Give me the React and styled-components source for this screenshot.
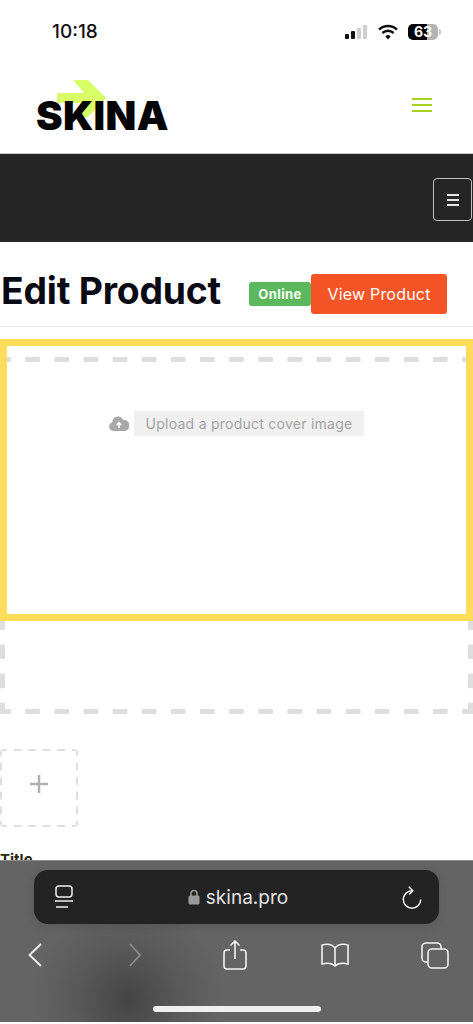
import React from 'react';
import styled, { createGlobalStyle, css } from 'styled-components';

const GlobalStyle = createGlobalStyle`
  html, body {
    margin: 0;
    padding: 0;
    background: #fff;
  }
  * {
    box-sizing: border-box;
  }
`;

// browser dashes come out too short, so the dashed outlines are gradients
const dashedEdges = (weight, dash, period, offset) => css`
  background-image:
    linear-gradient(90deg, #dedede ${dash}px, transparent ${dash}px),
    linear-gradient(90deg, #dedede ${dash}px, transparent ${dash}px),
    linear-gradient(180deg, #dedede ${dash}px, transparent ${dash}px),
    linear-gradient(180deg, #dedede ${dash}px, transparent ${dash}px);
  background-size:
    ${period}px ${weight}px,
    ${period}px ${weight}px,
    ${weight}px ${period}px,
    ${weight}px ${period}px;
  background-position:
    ${offset}px 0,
    ${offset}px 100%,
    0 ${offset}px,
    100% ${offset}px;
  background-repeat: repeat-x, repeat-x, repeat-y, repeat-y;
`;

const Page = styled.div`
  width: 473px;
  height: 1024px;
  display: flex;
  flex-direction: column;
  overflow: hidden;
  background: #fff;
  font-family: Inter, "Liberation Sans", sans-serif;
`;

const StatusBar = styled.div`
  height: 60px;
  flex: none;
  display: flex;
  justify-content: space-between;
  padding: 20px 35px 0 52px;
`;

const Clock = styled.div`
  font-size: 19px;
  font-weight: 500;
  line-height: 23px;
  color: #111;
`;

const StatusIcons = styled.div`
  display: flex;
  align-items: center;
  gap: 10px;
  height: 23px;
`;

const Battery = styled.div`
  position: relative;
  width: 30px;
  height: 16px;
  border-radius: 5px;
  background: linear-gradient(90deg, #000 0 63%, #b4b4b4 63% 100%);
  color: #fff;
  font-size: 14px;
  font-weight: 700;
  line-height: 16px;
  text-align: center;

  &::after {
    content: '';
    position: absolute;
    right: -3px;
    top: 5px;
    width: 2px;
    height: 6px;
    border-radius: 0 2px 2px 0;
    background: #c4c4c4;
  }
`;

const LogoBar = styled.header`
  height: 94px;
  flex: none;
  display: flex;
  justify-content: space-between;
  align-items: flex-start;
  padding: 20px 41px 0 37px;
  border-bottom: 1px solid #c9c9c9;
`;

const Logo = styled.div`
  position: relative;
  width: 132px;
  height: 60px;
`;

const LogoArrow = styled.svg`
  position: absolute;
  left: 20px;
  top: 0;
`;

const LogoText = styled.div`
  position: absolute;
  left: -1px;
  top: 11px;
  font-size: 40px;
  line-height: 50px;
  font-weight: 900;
  letter-spacing: 0.3px;
  color: #050505;
`;

const MenuLines = styled.div`
  width: 20px;
  margin-top: 18px;
  display: flex;
  flex-direction: column;
  gap: 4px;
`;

const MenuLine = styled.span`
  display: block;
  height: 2px;
  background: #a6d321;
`;

const DarkBar = styled.nav`
  height: 88px;
  flex: none;
  display: flex;
  justify-content: flex-end;
  align-items: flex-start;
  padding: 24px 1px 0 0;
  background: #252525;
`;

const ToggleButton = styled.button`
  width: 39px;
  height: 43px;
  padding: 0;
  display: flex;
  align-items: center;
  justify-content: center;
  background: transparent;
  border: 1.5px solid #c0c0c0;
  border-radius: 4px;
`;

const TitleRow = styled.div`
  height: 85px;
  flex: none;
  display: flex;
  align-items: center;
  padding: 20px 0 0 1px;
  border-bottom: 1px solid #e9e9e9;
`;

const Heading = styled.h1`
  margin: 0 28px 6px 0;
  font-size: 37.3px;
  line-height: 44px;
  font-weight: 700;
  letter-spacing: -0.2px;
  color: #0a0a14;
  white-space: nowrap;
`;

const OnlineBadge = styled.span`
  width: 62px;
  height: 24px;
  display: flex;
  align-items: center;
  justify-content: center;
  background: #5cb85c;
  border-radius: 3px;
  color: #fff;
  font-size: 13px;
  font-weight: 700;
  letter-spacing: 0.4px;
`;

const ViewButton = styled.button`
  width: 136px;
  height: 40px;
  padding: 0;
  background: #f45426;
  border: none;
  border-radius: 3px;
  color: #fff;
  font-family: inherit;
  font-size: 16px;
  letter-spacing: 0.2px;
`;

const Content = styled.main`
  flex: 1;
  min-height: 0;
  overflow: hidden;
  padding-top: 30px;
`;

const CoverDrop = styled.div`
  position: relative;
  height: 357px;
  display: flex;
  justify-content: center;
  padding-top: 54px;
  ${dashedEdges(5, 14.7, 29.13, -3.8)}
`;

const Highlight = styled.div`
  position: absolute;
  left: 0;
  right: 0;
  top: -18px;
  height: 282px;
  border: 7px solid #ffdc5a;
`;

const UploadHint = styled.div`
  display: flex;
  align-items: center;
  gap: 5px;
  height: 25px;
`;

const UploadLabel = styled.span`
  height: 25px;
  padding: 0 12px;
  display: flex;
  align-items: center;
  background: #f0f0f0;
  color: #a3a3a3;
  font-size: 14px;
  letter-spacing: 0.25px;
`;

const AddTile = styled.div`
  width: 78px;
  height: 78px;
  margin-top: 35px;
  padding-bottom: 8px;
  border-radius: 4px;
  display: flex;
  align-items: center;
  justify-content: center;
  ${dashedEdges(2, 7.3, 14.6, -1)}
`;

const FieldLabel = styled.div`
  margin-top: 24px;
  font-size: 15px;
  line-height: 18px;
  font-weight: 700;
  color: #2a2a10;
`;

const SafariBar = styled.footer`
  height: 162px;
  flex: none;
  display: flex;
  flex-direction: column;
  align-items: center;
  padding-top: 9px;
  border-top: 1px solid #8a8a8a;
  background: radial-gradient(circle at 128px 138px, #454545 0, #5a5a5a 55px, #646464 95px, #646464 100%);
`;

const UrlPill = styled.div`
  width: 405px;
  height: 54px;
  flex: none;
  display: flex;
  align-items: center;
  justify-content: space-between;
  padding: 0 17px 0 20px;
  background: #232323;
  border-radius: 14px;
  box-shadow: 0 2px 10px rgba(0, 0, 0, 0.12);
`;

const UrlText = styled.div`
  display: flex;
  align-items: center;
  gap: 6px;
  color: #e4e4e4;
  font-size: 19px;
`;

const ToolRow = styled.div`
  width: 100%;
  height: 52px;
  flex: none;
  margin-top: 5px;
  display: grid;
  grid-template-columns: repeat(5, 20px);
  column-gap: 80px;
  align-items: center;
  justify-items: center;
  padding-left: 25px;
`;

const HomeIndicator = styled.div`
  width: 168px;
  height: 6px;
  flex: none;
  margin-top: 25px;
  background: #efefef;
  border-radius: 3px;
`;

const BottomEdge = styled.div`
  height: 2px;
  flex: none;
  background: #fff;
`;

export default function App() {
  return (
    <Page>
      <GlobalStyle />
      <StatusBar>
        <Clock>10:18</Clock>
        <StatusIcons>
          <svg width="24" height="16" viewBox="0 0 24 16">
            <rect x="1" y="10" width="4" height="5" rx="1" fill="#111" />
            <rect x="7" y="7" width="4" height="8" rx="1" fill="#111" />
            <rect x="13" y="4" width="4" height="11" rx="1" fill="#cfcfcf" />
            <rect x="19" y="1" width="4" height="14" rx="1" fill="#cfcfcf" />
          </svg>
          <svg width="20" height="16" viewBox="0 0 20 16" fill="none" stroke="#111" strokeWidth="2.4">
            <path d="M1 5.6a13 13 0 0 1 18 0" />
            <path d="M4.4 9a8.2 8.2 0 0 1 11.2 0" />
            <path d="M10 15.5 7.4 12.4a3.6 3.6 0 0 1 5.2 0Z" fill="#111" stroke="none" />
          </svg>
          <Battery>63</Battery>
        </StatusIcons>
      </StatusBar>

      <LogoBar>
        <Logo>
          <LogoArrow width="50" height="40" viewBox="0 0 50 40">
            <path d="M16 0H31L49 18 31 37H16L26 23H0V13H27Z" fill="#d9ff66" />
          </LogoArrow>
          <LogoText>SKINA</LogoText>
        </Logo>
        <MenuLines>
          <MenuLine />
          <MenuLine />
          <MenuLine />
        </MenuLines>
      </LogoBar>

      <DarkBar>
        <ToggleButton aria-label="menu">
          <svg width="12" height="12" viewBox="0 0 12 12" stroke="#e6e6e6" strokeWidth="2">
            <path d="M0 1h12M0 6h12M0 11h12" />
          </svg>
        </ToggleButton>
      </DarkBar>

      <TitleRow>
        <Heading>Edit Product</Heading>
        <OnlineBadge>Online</OnlineBadge>
        <ViewButton>View Product</ViewButton>
      </TitleRow>

      <Content>
        <CoverDrop>
          <Highlight />
          <UploadHint>
            <svg width="20" height="15" viewBox="0 0 20 15">
              <path d="M4.6 15A4.4 4.4 0 0 1 3.3 6.4 5.6 5.6 0 0 1 14 3.9 5.6 5.6 0 0 1 15.8 15Z" fill="#a9a9a9" />
              <path d="M10 12V7M7.7 9 10 6.6 12.3 9" fill="none" stroke="#fff" strokeWidth="1.6" />
            </svg>
            <UploadLabel>Upload a product cover image</UploadLabel>
          </UploadHint>
        </CoverDrop>
        <AddTile>
          <svg width="18" height="18" viewBox="0 0 18 18" stroke="#b0b0b0" strokeWidth="2.5">
            <path d="M9 0v18M0 9h18" />
          </svg>
        </AddTile>
        <FieldLabel>Title</FieldLabel>
      </Content>

      <SafariBar>
        <UrlPill>
          <svg width="20" height="24" viewBox="0 0 20 24" fill="none" stroke="#efefef" strokeWidth="1.5">
            <rect x="2" y="1" width="16" height="11" rx="3" />
            <path d="M1 16h18M2 22h12" />
          </svg>
          <UrlText>
            <svg width="12" height="16" viewBox="0 0 12 16">
              <path d="M3 7V4.500a3 3 0 0 1 6 0V7" fill="none" stroke="#9a9a9a" strokeWidth="1.6" />
              <rect x="0.5" y="6.5" width="11" height="9" rx="1.5" fill="#9a9a9a" />
            </svg>
            skina.pro
          </UrlText>
          <svg width="20" height="23" viewBox="0 0 20 23" fill="none" stroke="#efefef" strokeWidth="1.5">
            <path d="M18.700 13.500A8.700 8.700 0 1 1 10 4.800" />
            <path d="M6.800 0.800 10.800 4.800 7.200 8.600" />
          </svg>
        </UrlPill>
        <ToolRow>
          <svg width="14" height="24" viewBox="0 0 14 24" fill="none" stroke="#f2f2f2" strokeWidth="1.8">
            <path d="M13 1 1.500 12 13 23" />
          </svg>
          <svg width="12" height="24" viewBox="0 0 12 24" fill="none" stroke="#8c8c8c" strokeWidth="1.8">
            <path d="M1 1l10 11L1 23" />
          </svg>
          <svg width="24" height="30" viewBox="0 0 24 30" fill="none" stroke="#f2f2f2" strokeWidth="1.6">
            <path d="M7 10H4a3 3 0 0 0-3 3v13a3 3 0 0 0 3 3h16a3 3 0 0 0 3-3V13a3 3 0 0 0-3-3h-3" />
            <path d="M12 19V1M7.500 5.500 12 1l4.500 4.500" />
          </svg>
          <svg width="30" height="24" viewBox="0 0 30 24" fill="none" stroke="#f2f2f2" strokeWidth="1.6">
            <path d="M15 5C12 1 6 1 2 2v19c4-1 10-1 13 2 3-3 9-3 13-2V2c-4-1-10-1-13 3Zm0 0v18" />
          </svg>
          <svg width="28" height="27" viewBox="0 0 28 27" fill="none" stroke="#f2f2f2" strokeWidth="1.6">
            <path d="M6 20H5a4 4 0 0 1-4-4V5a4 4 0 0 1 4-4h11a4 4 0 0 1 4 4v2" />
            <rect x="7" y="7" width="20" height="19" rx="4" />
          </svg>
        </ToolRow>
        <HomeIndicator />
      </SafariBar>
      <BottomEdge />
    </Page>
  );
}
